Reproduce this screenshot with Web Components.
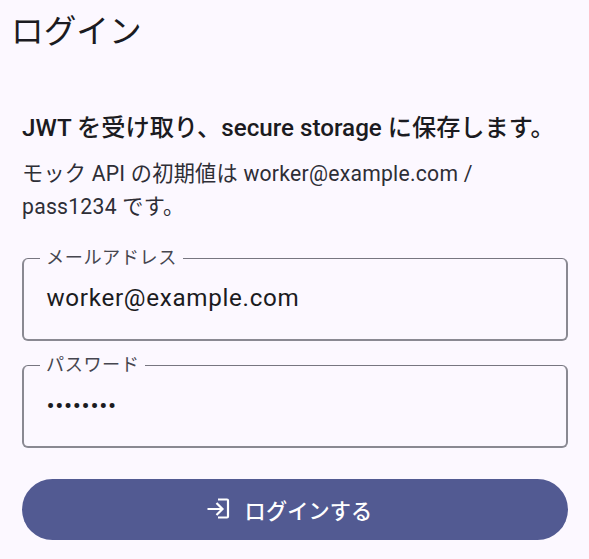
<!DOCTYPE html>
<html lang="ja">
<head>
<meta charset="utf-8">
<title>ログイン</title>
<style>
  html, body { margin: 0; padding: 0; background: #fcf8ff; }
  body { width: 589px; height: 559px; overflow: hidden; font-family: Roboto, "Noto Sans CJK JP", sans-serif; color: #1b1b21; }
</style>
</head>
<body>
<login-page></login-page>
<script>
class AppBar extends HTMLElement {
  constructor() {
    super();
    this.attachShadow({ mode: 'open' });
    this.shadowRoot.innerHTML = `
      <style>
        :host { display: flex; align-items: center; height: 64px; padding-left: 11px; }
        h1 { margin: 0; font-size: 32.7px; font-weight: 400; line-height: 40px; }
      </style>
      <h1><slot></slot></h1>`;
  }
}

class TextBox extends HTMLElement {
  constructor() {
    super();
    this.attachShadow({ mode: 'open' });
  }
  connectedCallback() {
    const label = this.getAttribute('label') || '';
    const value = this.getAttribute('value') || '';
    const dots = this.hasAttribute('obscure');
    this.shadowRoot.innerHTML = `
      <style>
        :host { display: block; }
        fieldset { margin: 0; padding: 0 22.5px; height: 92px; box-sizing: border-box;
          border: solid #8a8992; border-width: 1px 2px 2px; border-top-color: #777680; border-radius: 6px; min-width: 0; }
        legend { padding: 0 6px; margin-left: -6.5px; font-size: 18.15px; line-height: 18px; letter-spacing: 0.55px; color: #46464f; }
        .value { font-size: 24.2px; line-height: 32px; letter-spacing: 0.69px; padding-top: 15px; color: #1b1b21; }
        .value.dots { padding-top: 16px; letter-spacing: 0.62px; }
      </style>
      <fieldset>
        <legend>${label}</legend>
        <div class="value ${dots ? 'dots' : ''}">${dots ? '•'.repeat(value.length) : value}</div>
      </fieldset>`;
  }
}

class FilledButton extends HTMLElement {
  constructor() {
    super();
    this.attachShadow({ mode: 'open' });
    this.shadowRoot.innerHTML = `
      <style>
        :host { display: flex; align-items: center; justify-content: center; gap: 14px;
          height: 61px; border-radius: 31px; background: #525a92; color: #fff; padding-right: 12px;
          font-size: 21.175px; font-weight: 500; letter-spacing: 0.14px; }
        svg { width: 25px; height: 25px; display: block; }
      </style>
      <svg viewBox="0 0 25 25" fill="none" stroke="#fff" stroke-width="2.2">
        <path d="M12 2.5h9a1 1 0 0 1 1 1v16a1 1 0 0 1-1 1h-9"/>
        <path d="M1.5 12h15M10.5 6l6 6-6 6"/>
      </svg>
      <span><slot></slot></span>`;
  }
}

class LoginPage extends HTMLElement {
  constructor() {
    super();
    this.attachShadow({ mode: 'open' });
    this.shadowRoot.innerHTML = `
      <style>
        :host { display: block; }
        main { display: flex; flex-direction: column; padding: 48px 21px 0 22px; }
        .lead { margin: 0; font-size: 24.2px; font-weight: 500; line-height: 32px; }
        .hint { margin: 14px 0 0; font-size: 21.175px; line-height: 32.5px; letter-spacing: 0.25px; color: #2e2e36; }
        text-box.first { margin-top: 26px; }
        text-box.second { margin-top: 15px; }
        filled-button { margin-top: 31px; }
      </style>
      <app-bar>ログイン</app-bar>
      <main>
        <p class="lead">JWT を受け取り、secure storage に保存します。</p>
        <p class="hint">モック API の初期値は worker@example.com /<br>pass1234 です。</p>
        <text-box class="first" label="メールアドレス" value="worker@example.com"></text-box>
        <text-box class="second" label="パスワード" value="pass1234" obscure></text-box>
        <filled-button>ログインする</filled-button>
      </main>`;
  }
}

customElements.define('app-bar', AppBar);
customElements.define('text-box', TextBox);
customElements.define('filled-button', FilledButton);
customElements.define('login-page', LoginPage);
</script>
</body>
</html>
